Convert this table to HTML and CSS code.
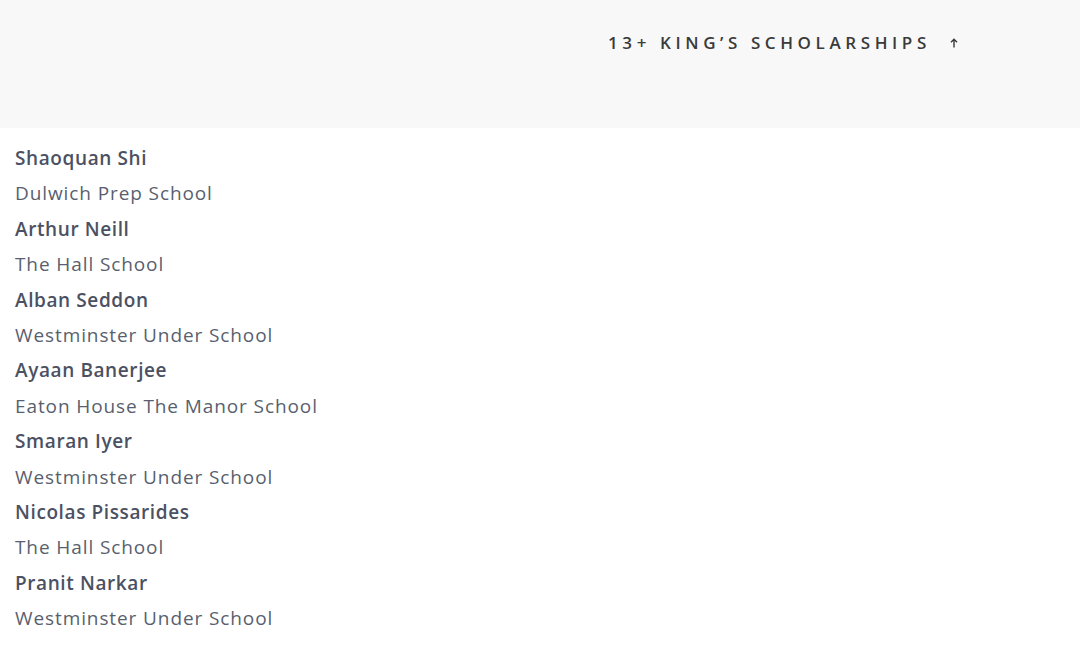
FILE: index.html
```html
<!DOCTYPE html>
<html lang="en">
<head>
<meta charset="utf-8">
<title>13+ King's Scholarships</title>
<link rel="stylesheet" href="styles.css">
</head>
<body>
<header class="banner">
  <div class="title">
    <span class="title-text">13+ KING’S SCHOLARSHIPS</span>
    <svg class="arrow" width="8" height="10" viewBox="0 0 8 10" aria-hidden="true"><path d="M4 9.5V1.2M1 4.2L4 1.2L7 4.2" fill="none" stroke="#3a3a3a" stroke-width="1.4"/></svg>
  </div>
</header>
<ul class="list">
  <li><span class="name">Shaoquan Shi</span><span class="school">Dulwich Prep School</span></li>
  <li><span class="name">Arthur Neill</span><span class="school">The Hall School</span></li>
  <li><span class="name">Alban Seddon</span><span class="school">Westminster Under School</span></li>
  <li><span class="name">Ayaan Banerjee</span><span class="school">Eaton House The Manor School</span></li>
  <li><span class="name">Smaran Iyer</span><span class="school">Westminster Under School</span></li>
  <li><span class="name">Nicolas Pissarides</span><span class="school">The Hall School</span></li>
  <li><span class="name">Pranit Narkar</span><span class="school">Westminster Under School</span></li>
</ul>
</body>
</html>
```
FILE: styles.css
```css
html, body {
  margin: 0;
  padding: 0;
  background: #ffffff;
  font-family: "Open Sans", "Noto Sans", sans-serif;
}
.banner {
  height: 128px;
  background: #f8f8f8;
  box-sizing: border-box;
  padding: 30px 0 0 608px;
}
.title {
  display: flex;
  align-items: center;
  gap: 19px;
  color: #3a3a3a;
}
.title-text {
  font-size: 17px;
  font-weight: 600;
  letter-spacing: 4.6px;
  line-height: 26px;
}
.arrow {
  display: block;
}
.list {
  list-style: none;
  margin: 0;
  padding: 13px 0 0 15px;
  display: flex;
  flex-direction: column;
}
.list li {
  display: flex;
  flex-direction: column;
}
.name, .school {
  line-height: 35.4px;
  font-size: 19px;
}
.name {
  font-weight: 600;
  color: #4b5162;
  letter-spacing: 0.6px;
}
.school {
  font-weight: 400;
  color: #595f6e;
  letter-spacing: 0.9px;
}
```
